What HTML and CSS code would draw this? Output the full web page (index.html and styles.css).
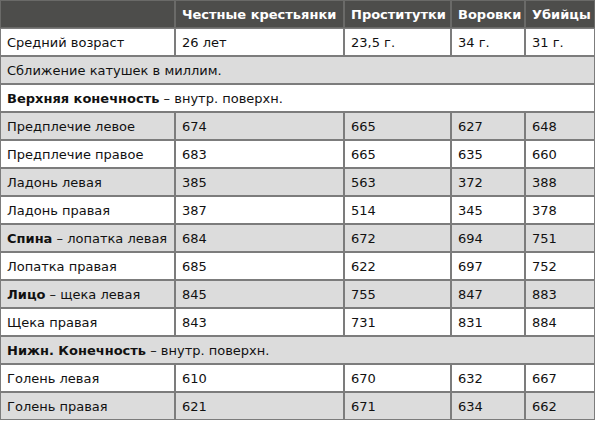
FILE: index.html
```html
<!DOCTYPE html>
<html>
<head>
<meta charset="utf-8">
<link rel="stylesheet" href="styles.css">
</head>
<body>
<table class="data">
  <colgroup>
    <col class="c1"><col class="c2"><col class="c3"><col class="c4"><col class="c5">
  </colgroup>
  <thead>
    <tr class="head"><th></th><th>Честные крестьянки</th><th>Проститутки</th><th>Воровки</th><th>Убийцы</th></tr>
  </thead>
  <tbody>
    <tr class="w"><td>Средний возраст</td><td>26 лет</td><td>23,5 г.</td><td>34 г.</td><td>31 г.</td></tr>
    <tr class="g"><td colspan="5">Сближение катушек в миллим.</td></tr>
    <tr class="w"><td colspan="5"><b>Верхняя конечность</b> – внутр. поверхн.</td></tr>
    <tr class="g"><td>Предплечие левое</td><td>674</td><td>665</td><td>627</td><td>648</td></tr>
    <tr class="w"><td>Предплечие правое</td><td>683</td><td>665</td><td>635</td><td>660</td></tr>
    <tr class="g"><td>Ладонь левая</td><td>385</td><td>563</td><td>372</td><td>388</td></tr>
    <tr class="w"><td>Ладонь правая</td><td>387</td><td>514</td><td>345</td><td>378</td></tr>
    <tr class="g"><td><b>Спина</b> – лопатка левая</td><td>684</td><td>672</td><td>694</td><td>751</td></tr>
    <tr class="w"><td>Лопатка правая</td><td>685</td><td>622</td><td>697</td><td>752</td></tr>
    <tr class="g"><td><b>Лицо</b> – щека левая</td><td>845</td><td>755</td><td>847</td><td>883</td></tr>
    <tr class="w"><td>Щека правая</td><td>843</td><td>731</td><td>831</td><td>884</td></tr>
    <tr class="g"><td colspan="5"><b>Нижн. Конечность</b> – внутр. поверхн.</td></tr>
    <tr class="w"><td>Голень левая</td><td>610</td><td>670</td><td>632</td><td>667</td></tr>
    <tr class="g"><td>Голень правая</td><td>621</td><td>671</td><td>634</td><td>662</td></tr>
  </tbody>
</table>
</body>
</html>
```

FILE: styles.css
```css
html, body {
  margin: 0;
  padding: 0;
  background: #ffffff;
}
.data {
  width: 595px;
  table-layout: fixed;
  border-collapse: separate;
  border-spacing: 0;
  font-family: "DejaVu Sans", Verdana, sans-serif;
  font-size: 13px;
  color: #111111;
}
.c1 { width: 175px; }
.c2 { width: 169px; }
.c3 { width: 107px; }
.c4 { width: 74px; }
.c5 { width: 70px; }
.data th,
.data td {
  box-sizing: border-box;
  height: 28px;
  padding: 0 4px 0 6px;
  border: 1px solid #7c7c7c;
  text-align: left;
  vertical-align: middle;
  white-space: nowrap;
  overflow: hidden;
}
.head th {
  background: #4d4d4b;
  color: #ffffff;
  font-weight: bold;
  border-color: #6a6a68;
}
.g td { background: #dcdcdc; }
.w td { background: #ffffff; }
```
